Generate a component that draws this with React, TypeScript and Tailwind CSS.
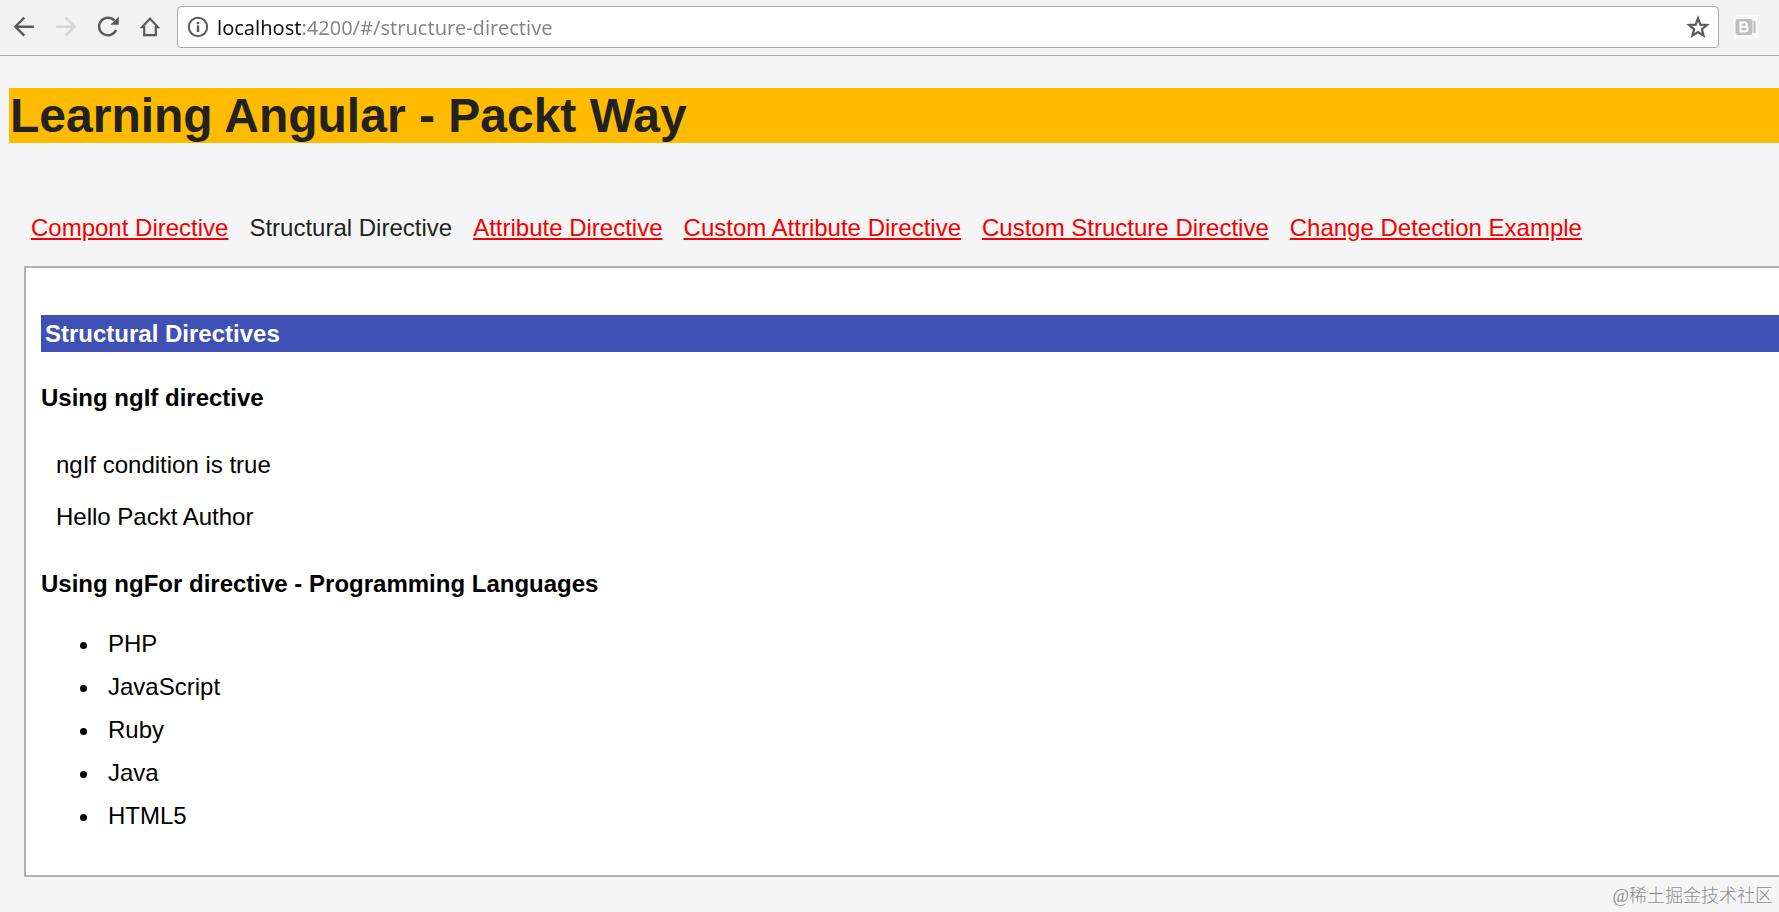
const links = [
  { label: "Compont Directive", href: "#/component-directive" },
  { label: "Structural Directive", href: "#/structure-directive", active: true },
  { label: "Attribute Directive", href: "#/attribute-directive" },
  { label: "Custom Attribute Directive", href: "#/custom-attribute-directive" },
  { label: "Custom Structure Directive", href: "#/custom-structure-directive" },
  { label: "Change Detection Example", href: "#/change-detection" },
];

const languages = ["PHP", "JavaScript", "Ruby", "Java", "HTML5"];

function BrowserBar() {
  return (
    <div className="flex items-center border-b border-[#a9a9a9] bg-[#f2f2f2] pt-1.5 pb-[7px] pl-3 text-[#5a5a5a]">
      <button type="button" aria-label="Back" className="mr-[18px]">
        <svg width="24" height="24" viewBox="0 0 24 24" fill="none" stroke="currentColor" strokeWidth="2.4">
          <path d="M21.8 11.7H4M12.3 2.7l-9 9 9 9" />
        </svg>
      </button>
      <button type="button" aria-label="Forward" disabled className="mr-[18px] text-[#d6d6d6]">
        <svg width="24" height="24" viewBox="0 0 24 24" fill="none" stroke="currentColor" strokeWidth="2.4">
          <path d="M2.2 11.7H20M11.7 2.7l9 9-9 9" />
        </svg>
      </button>
      <button type="button" aria-label="Reload" className="mr-[18px]">
        <svg width="24" height="24" viewBox="0 0 24 24" fill="none" stroke="currentColor" strokeWidth="2.4">
          <path d="M18.4 5.6A8.8 8.8 0 1 0 20 15" />
          <path d="M22.8 1.6v8.2h-8.4z" fill="currentColor" stroke="none" />
        </svg>
      </button>
      <button type="button" aria-label="Home" className="mr-[15px]">
        <svg width="24" height="24" viewBox="0 0 24 24" fill="none" stroke="currentColor" strokeWidth="2.2">
          <path d="M4.2 12.1 12 3.6l7.8 8.5h-2v8H6.2v-8z" />
        </svg>
      </button>
      <div className="flex h-[42px] flex-1 items-center rounded-[4px] border border-[#a9a9a9] bg-white px-2">
        <svg width="24" height="24" viewBox="0 0 24 24" fill="none" stroke="currentColor" strokeWidth="2" className="shrink-0">
          <circle cx="12" cy="12" r="9.2" />
          <path d="M12 10.5V17M12 7v2.2" strokeWidth="2.4" />
        </svg>
        <input
          type="text"
          aria-label="Address"
          defaultValue="localhost:4200/#/structure-directive"
          className="ml-[7px] h-8 min-w-0 flex-1 bg-[linear-gradient(to_right,#111_85px,#858585_85px)] bg-clip-text font-['Noto_Sans',sans-serif] text-[20px] text-transparent caret-black outline-none"
        />
        <button type="button" aria-label="Bookmark this page">
          <svg width="24" height="24" viewBox="0 0 24 24" fill="none" stroke="currentColor" strokeWidth="2.2">
            <path d="M12 3.4l2.4 6.2 6.6.4-5.1 4.2 1.7 6.4-5.6-3.6-5.6 3.6 1.7-6.4L3 10l6.6-.4z" />
          </svg>
        </button>
      </div>
      <button type="button" aria-label="Extension" className="mr-[21px] ml-[15px] text-[#bdbdbd]">
        <svg width="24" height="24" viewBox="0 0 24 24" fill="none">
          <rect width="24" height="24" fill="#f8f8f8" />
          <rect x="1.5" y="4" width="17" height="16" rx="3" fill="currentColor" />
          <path d="M6.5 7.5h4.2a2 2 0 0 1 0 4.3H6.5zM6.5 11.8h4.8a2.3 2.3 0 0 1 0 4.6H6.5z" stroke="#fff" strokeWidth="2" />
          <path d="M20.5 6v12" stroke="currentColor" strokeWidth="2" />
        </svg>
      </button>
    </div>
  );
}

export default function App() {
  return (
    <div className="flex min-h-screen flex-col overflow-x-hidden bg-[#f5f5f5] font-['Liberation_Sans',Arial,sans-serif] text-[24px] leading-[27px] text-[#222]">
      <BrowserBar />
      <h1 className="mt-8 ml-[9px] bg-[#ffbb00] pl-px text-[48px] leading-[55px] font-bold">
        Learning Angular - Packt Way
      </h1>
      <nav className="mt-[71px] ml-[31px] flex gap-[21px] whitespace-nowrap">
        {links.map((link) => (
          <a
            key={link.label}
            href={link.href}
            className={link.active ? "" : "text-[#f40000] underline"}
          >
            {link.label}
          </a>
        ))}
      </nav>
      <main className="mt-[25px] ml-6 border-2 border-r-0 border-[#b2b2b2] bg-white pt-[47px] pb-[38px] pl-[15px] text-black">
        <h2 className="bg-[#3f51b5] px-1 py-[5px] font-bold text-white">
          Structural Directives
        </h2>
        <h3 className="mt-8 font-bold">Using ngIf directive</h3>
        <div className="mt-10 ml-[15px]">
          <p>ngIf condition is true</p>
          <p className="mt-[25px]">Hello Packt Author</p>
        </div>
        <h3 className="mt-10 font-bold">
          Using ngFor directive - Programming Languages
        </h3>
        <ul className="mt-[25px] list-disc pl-[60px] leading-[43px]">
          {languages.map((language) => (
            <li key={language} className="pl-[7px]">
              {language}
            </li>
          ))}
        </ul>
      </main>
      <footer className="mt-1.5 pr-1.5 text-right font-['Liberation_Serif','Noto_Sans_CJK_SC',serif] text-[18px] font-light text-[#8c8c8c]">
        @稀土掘金技术社区
      </footer>
    </div>
  );
}
